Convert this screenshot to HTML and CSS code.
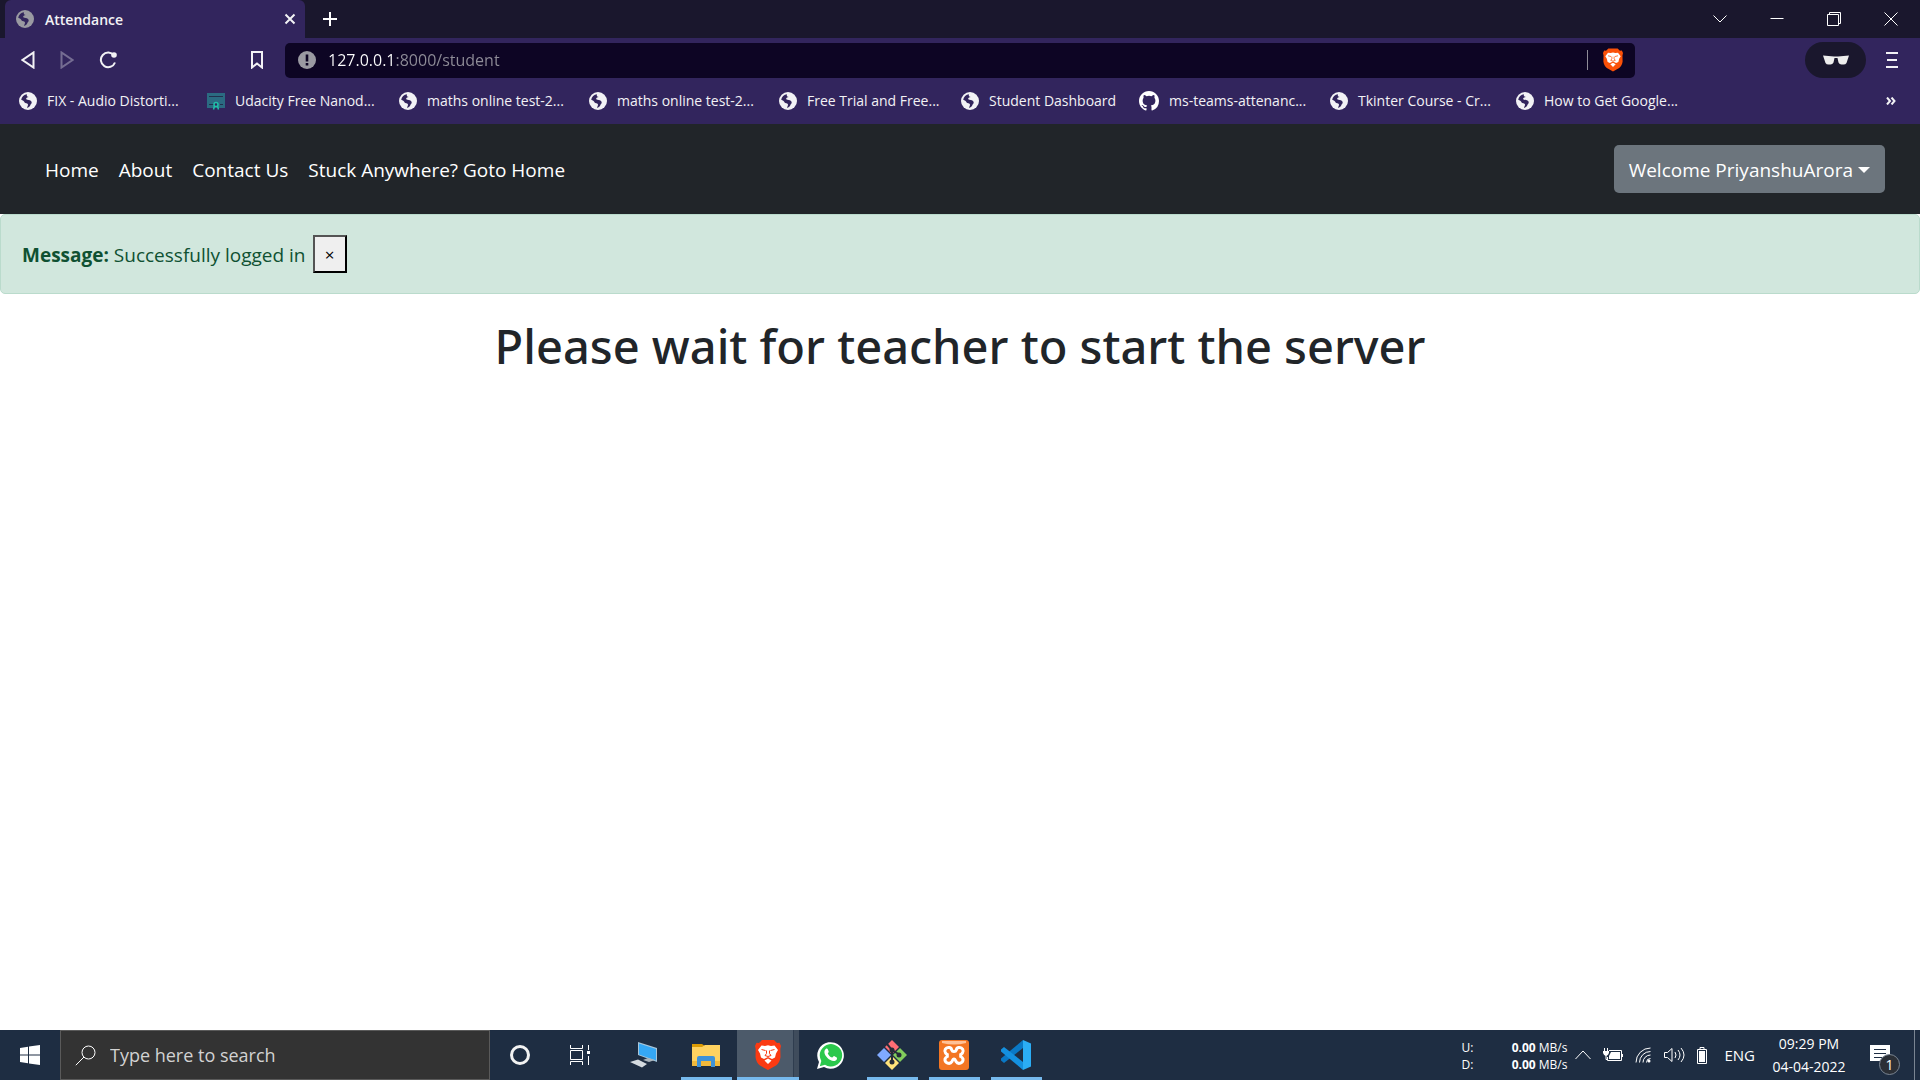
FILE: index.html
```html
<!DOCTYPE html>
<html lang="en">
<head>
<meta charset="utf-8">
<meta name="viewport" content="width=device-width, initial-scale=1">
<title>Attendance</title>
<link rel="stylesheet" href="styles.css">
</head>
<body>
<svg class="defs" width="0" height="0" aria-hidden="true">
  <symbol id="globe" viewBox="0 0 18 18">
    <circle cx="9" cy="9" r="9" fill="currentColor"/>
    <path d="M2.200 7.800C2.600 4.800 5 2.500 8 2.200C7.400 3.800 8 4.600 9.800 5C8 5.300 7 6 7.200 6.900C7.500 8 9.200 7.600 11 8.300C13.200 9.200 13.200 11.500 11.600 12.600C11.200 14 10.400 15.400 8 16C8.200 14.400 9.400 13.200 8.900 12.200C8.300 11.200 6.300 11.700 5.600 10.600C5 9 3.800 8.200 2.200 7.800Z" fill="#32255d"/>
  </symbol>
  <symbol id="brave" viewBox="0 0 26 30">
    <path class="brave-shield" d="M7 0h12l3 3 2.500-.3L26 6l-.7 3 .2 8c-.5 4-2 6.500-4.500 8.500L13 30l-8-4.500C2.500 23.500 1 21 .5 17l.2-8L0 6l1.500-3.300L4 3Z"/>
    <path d="M6.500 5.500 10 6l3-.8 3 .8 3.500-.5L23 10l-2 3.500-1 4-3 1.500-4-2-4 2-3-1.500-1-4L3 10ZM13 18.500l3.500 2L13 24l-3.500-3.500Z" fill="#fff"/>
    <path d="m6.500 9.500 4 1M19.500 9.500l-4 1M11.500 10.500v3l-1.500 2 3 1 3-1-1.500-2v-3" fill="none" class="brave-lines"/>
  </symbol>
</svg>

<header class="browser">
  <div class="tabstrip">
    <div class="tab">
      <svg class="globe muted" aria-hidden="true"><use href="#globe"/></svg>
      <span class="tab-title">Attendance</span>
      <button class="icon-btn" aria-label="Close tab"><svg width="12" height="12" viewBox="0 0 12 12"><path d="M1.500 1.500l9 9M10.500 1.500l-9 9" class="line2"/></svg></button>
    </div>
    <button class="icon-btn new-tab" aria-label="New tab"><svg width="16" height="16" viewBox="0 0 16 16"><path d="M8 1v14M1 8h14" class="line2"/></svg></button>
    <div class="window-controls">
      <button class="icon-btn" aria-label="Search tabs"><svg width="14" height="14" viewBox="0 0 14 14"><path d="M.5 3.500 7 10l6.500-6.500" class="line1"/></svg></button>
      <button class="icon-btn" aria-label="Minimize"><svg width="14" height="14" viewBox="0 0 14 14"><path d="M.5 6.500h13" class="line1"/></svg></button>
      <button class="icon-btn" aria-label="Restore"><svg width="14" height="14" viewBox="0 0 14 14"><path d="M.5 2.500h11v11H.5zM2.500 2V.5h11v11H12" class="line1"/></svg></button>
      <button class="icon-btn" aria-label="Close"><svg width="14" height="14" viewBox="0 0 14 14"><path d="m.5.500 13 13M13.500.500l-13 13" class="line1"/></svg></button>
    </div>
  </div>

  <div class="toolbar">
    <div class="history">
      <button class="icon-btn" aria-label="Back"><svg width="14" height="18" viewBox="0 0 14 18"><path d="M12.500 1.500v15L1.500 9Z" class="line2"/></svg></button>
      <button class="icon-btn faded" aria-label="Forward"><svg width="14" height="18" viewBox="0 0 14 18"><path d="M1.500 1.500v15l11-7.500Z" class="line2"/></svg></button>
      <button class="icon-btn" aria-label="Reload"><svg width="18" height="18" viewBox="0 0 18 18"><path d="M15 4.500A7.300 7.300 0 1 0 16 11.500" class="line2"/><circle cx="15" cy="4" r="2.800" fill="currentColor"/></svg></button>
    </div>
    <button class="icon-btn bookmark" aria-label="Bookmark this page"><svg width="14" height="18" viewBox="0 0 14 18"><path d="M2 1h10v15.500L7 12.500l-5 4Z" class="line2"/></svg></button>
    <div class="address">
      <svg width="18" height="18" viewBox="0 0 18 18" aria-hidden="true"><circle cx="9" cy="9" r="9" fill="#9a9aa2"/><path d="M7.700 3.500h2.600v7H7.700zM7.700 12h2.600v2.500H7.700z" fill="#0d0524"/></svg>
      <input class="url" type="text" aria-label="Address" value="127.0.0.1:8000/student">
      <span class="divider"></span>
      <button class="icon-btn" aria-label="Brave Shields"><svg width="20" height="24" class="shield-flat"><use href="#brave"/></svg></button>
    </div>
    <button class="private" aria-label="Private window"><svg width="26" height="10" viewBox="0 0 26 10"><path d="M0 .5 11 1.500h4L26 .5l-1 3-1.500 4.500q-1 1.500-3 1.500h-2q-2 0-3-2L14.500 3h-3L10.500 7.500q-1 2-3 2h-2q-2 0-3-1.500L1 3.500Z" fill="#eee"/></svg></button>
    <button class="icon-btn" aria-label="Menu"><svg width="12" height="18" viewBox="0 0 12 18"><path d="M0 2h12M1 9h10M0 16h12" class="line2"/></svg></button>
  </div>

  <nav class="bookmarks" aria-label="Bookmarks">
    <a href="#"><svg class="globe" aria-hidden="true"><use href="#globe"/></svg><span>FIX - Audio Distorti...</span></a>
    <a href="#"><svg class="globe" viewBox="0 0 18 18" aria-hidden="true"><path d="M0 1h18v15H0z" fill="#2b6b82"/><path d="M2 4.500h14M2 12.500h5M13 12.500h3" stroke="#21304f"/><circle cx="9" cy="12.500" r="2" fill="#32255d" stroke="#20c0a8" stroke-width="1.500"/><path d="m7.500 14-1 3.500M10.500 14l1 3.500" stroke="#20c0a8" stroke-width="1.500"/></svg><span>Udacity Free Nanod...</span></a>
    <a href="#"><svg class="globe" aria-hidden="true"><use href="#globe"/></svg><span>maths online test-2...</span></a>
    <a href="#"><svg class="globe" aria-hidden="true"><use href="#globe"/></svg><span>maths online test-2...</span></a>
    <a href="#"><svg class="globe" aria-hidden="true"><use href="#globe"/></svg><span>Free Trial and Free...</span></a>
    <a href="#"><svg class="globe" aria-hidden="true"><use href="#globe"/></svg><span>Student Dashboard</span></a>
    <a href="#"><svg class="github" viewBox="0 0 16 16" aria-hidden="true"><path fill="#fff" d="M8 0C3.580 0 0 3.580 0 8c0 3.540 2.290 6.530 5.470 7.590.4.070.55-.17.55-.38 0-.19-.01-.82-.01-1.490-2.010.37-2.530-.49-2.690-.94-.09-.23-.48-.94-.82-1.130-.28-.15-.68-.52-.01-.53.63-.01 1.080.58 1.230.82.72 1.210 1.870.87 2.330.66.070-.52.28-.87.51-1.070-1.780-.2-3.640-.89-3.640-3.950 0-.87.31-1.590.82-2.150-.08-.2-.36-1.020.08-2.120 0 0 .67-.21 2.200.82a7.600 7.600 0 0 1 4 0c1.530-1.040 2.200-.82 2.200-.82.44 1.100.16 1.920.08 2.120.51.56.82 1.270.82 2.150 0 3.070-1.870 3.750-3.650 3.950.29.25.54.73.54 1.480 0 1.070-.01 1.930-.01 2.200 0 .21.15.46.55.38A8.010 8.010 0 0 0 16 8c0-4.420-3.580-8-8-8z"/></svg><span>ms-teams-attenanc...</span></a>
    <a href="#"><svg class="globe" aria-hidden="true"><use href="#globe"/></svg><span>Tkinter Course - Cr...</span></a>
    <a href="#"><svg class="globe" aria-hidden="true"><use href="#globe"/></svg><span>How to Get Google...</span></a>
    <button class="icon-btn" aria-label="More bookmarks"><svg width="10" height="8" viewBox="0 0 10 8"><path d="m1 .5 3 3.500-3 3.500M5.500.500l3 3.500-3 3.500" class="line2"/></svg></button>
  </nav>
</header>

<nav class="navbar" aria-label="Site">
  <a href="#">Home</a>
  <a href="#">About</a>
  <a href="#">Contact Us</a>
  <a href="#">Stuck Anywhere? Goto Home</a>
  <button class="account">Welcome PriyanshuArora<span class="caret"></span></button>
</nav>

<main>
  <div class="alert" role="alert">
    <p><strong>Message:</strong> Successfully logged in</p>
    <button class="dismiss" aria-label="Close">×</button>
  </div>
  <h1>Please wait for teacher to start the server</h1>
</main>

<footer class="taskbar">
  <button class="task start" aria-label="Start"><svg width="20" height="20" viewBox="0 0 20 20"><path fill="#fff" d="M0 3l8-1.200V9.500H0zM9 1.600 20 0v9.500H9zM0 10.500h8v7.700L0 17zM9 10.500h11V20L9 18.400z"/></svg></button>
  <label class="search">
    <svg width="21" height="21" viewBox="0 0 21 21" aria-hidden="true"><circle cx="13.500" cy="7.500" r="6.500" class="line1"/><path d="M9 12 .8 20.200" class="line1"/></svg>
    <input type="text" aria-label="Search" placeholder="Type here to search">
  </label>
  <button class="task start" aria-label="Cortana"><svg width="20" height="20" viewBox="0 0 20 20"><circle cx="10" cy="10" r="8.500" fill="none" stroke="#f2f2f2" stroke-width="3"/></svg></button>
  <button class="task start" aria-label="Task view"><svg width="20" height="20" viewBox="0 0 20 20"><path d="M.5 0v3.500h12V0M.5 5.500h12v9H.5zM.5 20v-3.500h12V20M18.500 0v5M18.500 11v9" class="line1"/><path d="M17 6h3v3h-3z" fill="#fff"/></svg></button>
  <div class="apps">
    <button class="task" aria-label="This PC"><svg width="28" height="26" viewBox="0 0 28 26"><path d="m8 0 19 6v14L8 13Z" fill="#a9c5d8"/><path d="m9 1.500 17 5.500v11.500L9 12.500Z" fill="#35a7f4"/><path d="m13 18 5-2 7 2-6 2Z" fill="#aab4bb"/><path d="m0 20 8-2.500L17 22l-5 3.500Z" fill="#d5dbe0"/></svg></button>
    <button class="task open" aria-label="File Explorer"><svg width="28" height="24" viewBox="0 0 28 24"><path d="M0 1h10l3 2-2 3H0z" fill="#dc9b04"/><path d="M0 4h10l3-2h15v21H0z" fill="#ffd260"/><path d="M0 18h28v5H0z" fill="#f2b93b"/><path d="M5 24V15q0-2 2-2h14q2 0 2 2v9h-4v-6H9v6z" fill="#3f92d8"/></svg></button>
    <button class="task open active" aria-label="Brave"><svg width="26" height="30" class="shield-red"><use href="#brave"/></svg></button>
    <button class="task" aria-label="WhatsApp"><svg width="27" height="27" viewBox="0 0 27 27"><path d="M0 27l2-7A13.300 13.300 0 1 1 7 25Z" fill="#fff"/><path d="M2.800 24.200 4.300 19A11.200 11.200 0 1 1 8 22.800Z" fill="#2bc84c"/><path d="M9 6.800c.8-.5 1.500-.2 1.800.5l.9 2.200c.2.800-.9 1.600-.9 1.900.8 1.900 2.200 3.200 4.300 4.200.5.200 1.400-1.600 2-1.500l2.600 1.300c.8.500.1 2.500-1 3.100-2.600 1.400-6-.4-8.200-2.500C7.700 13.200 6 9 9 6.800Z" fill="#fff"/></svg></button>
    <button class="task open" aria-label="Git"><svg width="30" height="30" viewBox="0 0 30 30"><path d="M15 0l7 7-7 7-7-7Z" fill="#ff6d75"/><path d="m7 8 7 7-7 7-7-7Z" fill="#80aaff"/><path d="m23 8 7 7-7 7-7-7Z" fill="#82cc5c"/><path d="m15 16 7 7-7 7-7-7Z" fill="#ffe27a"/><path d="m10 4 5 6v13M15 10l8 5" fill="none" stroke="#252b38" stroke-width="2"/><circle cx="15" cy="10" r="2.500" fill="#252b38"/><circle cx="15" cy="22" r="2.500" fill="#252b38"/><circle cx="22" cy="15" r="2.500" fill="#252b38"/></svg></button>
    <button class="task open" aria-label="XAMPP"><svg width="30" height="30" viewBox="0 0 30 30"><rect width="30" height="30" rx="3" fill="#f37623"/><path d="M3 1h24v2q-12 3-24 0z" fill="#ffc195"/><path d="M9.500 7.500a3.500 3.500 0 0 0-3 5.500q.8 1 1.800 1.500l0 2q-1.800.8-2.300 2.500a3.800 3.800 0 0 0 7 2.500q1-2.500 2-2.500t2 2.500a3.800 3.800 0 0 0 7-2.500q-.5-1.700-2.300-2.500l0-2q1-.5 1.800-1.500a3.500 3.500 0 0 0-3-5.500h-1q-2 .5-2.200 2.500-.5 1.500-2.300 1.500t-2.300-1.500q-.2-2-2.200-2.500Z" fill="none" stroke="#fff" stroke-width="3"/></svg></button>
    <button class="task open" aria-label="Visual Studio Code"><svg width="30" height="30" viewBox="0 0 30 30"><path d="M22 0v8L3 23 0 20.500v-2Z" fill="#0a78c5"/><path d="M22 30v-8L3 7 0 9.500v2Z" fill="#1490df"/><path d="m22 0 8 3.500v23L22 30Z" fill="#2badf5"/></svg></button>
  </div>

  <div class="tray">
    <dl class="net">
      <dt>U:</dt><dd><b>0.00</b> MB/s</dd>
      <dt>D:</dt><dd><b>0.00</b> MB/s</dd>
    </dl>
    <div class="tray-icons">
      <button class="icon-btn" aria-label="Show hidden icons"><svg width="16" height="10" viewBox="0 0 16 10"><path d="m.5 9 7.500-8 7.500 8" class="line1"/></svg></button>
      <svg width="20" height="14" viewBox="0 0 20 14" role="img" aria-label="Charging"><path d="M6 2.500h12.500v10H4.500V9M19.500 6v3M1.500 0v3M4.500 0v3M3 7v4.500h1.500" class="line1"/><path d="M0 3h6v2q-1 3-3 3T0 5zM8 4h9v7H6V8z" fill="#fff"/></svg>
      <svg width="17" height="16" viewBox="0 0 17 16" role="img" aria-label="Wi-Fi"><path d="M1 15.500A14.500 14.500 0 0 1 15.500 1M4.500 15.500a11 11 0 0 1 11-11M8 15.500A7.500 7.500 0 0 1 15.500 8M11.500 15.500a4 4 0 0 1 4-4" class="line1"/><circle cx="14" cy="14" r="1.500" fill="#fff"/></svg>
      <svg width="21" height="18" viewBox="0 0 21 18" role="img" aria-label="Volume"><path d="M.5 6.500h3l4.500-4v13l-4.500-4h-3zM11 6q2 3 0 6M14 4q4 5 0 10M17 2q6 7 0 14" class="line1"/></svg>
      <svg width="10" height="17" viewBox="0 0 10 17" role="img" aria-label="Battery"><path d="M.5 2.500h9v14h-9zM3 2V.500h4V2" class="line1"/><path d="M2 4h6v11H2z" fill="#fff"/></svg>
    </div>
    <span class="lang">ENG</span>
    <time class="clock" datetime="2022-04-04T21:29">09:29 PM<br>04-04-2022</time>
    <button class="icon-btn notify" aria-label="Notifications"><svg width="20" height="20" viewBox="0 0 20 20"><path d="M0 0h20v16h-5l-5 4v-4H0z" fill="#fff"/><path d="M4 4.500h12M4 8.500h12M4 12.500h8" stroke="#1e2d42"/></svg><span class="badge">1</span></button>
  </div>
</footer>
</body>
</html>
```
FILE: styles.css
```css
* { box-sizing: border-box; }

body {
  margin: 0;
  min-height: 100vh;
  display: flex;
  flex-direction: column;
  background: #fff;
  color: #212529;
  font-family: "Open Sans", "Noto Sans", sans-serif;
  font-size: 19px;
}

button, input { font: inherit; }
button { border: 0; padding: 0; background: none; color: inherit; }
a { color: inherit; text-decoration: none; }
svg { display: block; flex: none; }
.defs { position: absolute; }
.line1, .line2 { fill: none; stroke: currentColor; stroke-width: 1px; }
.line2 { stroke-width: 2px; }
.icon-btn { display: flex; align-items: center; justify-content: center; }

/* Browser chrome */
.browser { background: #32255d; color: #f2f2f5; font-size: 14px; }
.tabstrip { display: flex; align-items: center; height: 38px; padding-left: 5px; background: #1a172d; }
.tab { display: flex; align-items: center; gap: 11px; width: 300px; height: 38px; padding: 0 9px 0 11px; background: #32255d; border-radius: 6px 6px 0 0; }
.tab-title { flex: 1; font-weight: 600; }
.globe { width: 18px; height: 18px; }
.globe.muted { color: #9a9aa2; }
.github { width: 20px; height: 20px; }
.new-tab { margin-left: 17px; color: #fff; }
.window-controls { display: flex; margin-left: auto; padding-right: 1px; color: #fff; }
.window-controls .icon-btn { width: 57px; height: 38px; }

.toolbar { display: flex; align-items: center; height: 45px; padding: 0 22px 1px 21px; }
.history { display: flex; align-items: center; gap: 25px; }
.faded { opacity: .35; }
.bookmark { margin-left: 133px; }
.address { flex: 1; display: flex; align-items: center; height: 35px; margin: 0 170px 0 21px; padding: 0 12px 0 13px; background: #0d0524; border-radius: 5px; }
.url { flex: 1; min-width: 0; margin-left: 12px; padding: 0; border: 0; outline: 0; font-size: 16px; color: #8f8d98; background: linear-gradient(90deg, #fff 66px, #8f8d98 66px); background-clip: text; -webkit-text-fill-color: transparent; }
.divider { width: 1px; height: 20px; margin-right: 15px; background: #8f8d98; }
.shield-flat { --shield: #fb5108; }
.shield-red { --shield: #fb3a12; }
.brave-shield { fill: var(--shield); }
.brave-lines { stroke: var(--shield); stroke-width: 1px; }
.private { display: flex; align-items: center; justify-content: center; width: 61px; height: 36px; margin-right: 20px; border-radius: 18px; background: #1a172d; }

.bookmarks { display: grid; grid-template-columns: 188px 192px 190px 190px 182px 178px 191px 186px 200px 1fr; align-items: center; height: 41px; padding: 0 24px 6px 19px; }
.bookmarks a { display: flex; align-items: center; gap: 10px; white-space: nowrap; }
.bookmarks .icon-btn { justify-self: end; }

/* Site */
.navbar { display: flex; align-items: center; gap: 20px; min-height: 90px; padding: 0 35px 0 45px; background: #212529; color: #fff; }
.navbar a { padding-top: 1px; }
.account { display: flex; align-items: center; gap: 5px; height: 48px; margin-left: auto; padding: 1px 15px 0; border-radius: 5px; background: #6c757d; }
.caret { border: 6px solid transparent; border-top-color: currentColor; border-bottom: 0; }

main { flex: 1; }
.alert { display: flex; align-items: center; gap: 7px; min-height: 80px; padding: 20px; border: 1px solid #badbcc; border-radius: 5px; background: #d1e7dd; color: #0f5132; }
.alert p { margin: 0; padding: 1px 0 0 1px; }
.dismiss { width: 34px; height: 38px; border: 2px outset #000; background: #efefef; color: #000; font-size: 17px; }
h1 { margin: 22px 0 0; text-align: center; font-family: "Noto Sans", "Open Sans", sans-serif; font-size: 47px; line-height: 60px; font-weight: 500; }

/* Taskbar */
.taskbar { display: flex; height: 50px; background: #1e2d42; color: #fff; }
.apps { display: flex; margin-left: 3px; }
.task { display: flex; align-items: center; justify-content: center; width: 62px; border: solid transparent; border-width: 3px 0; flex: none; }
.start { width: 60px; }
.open { background: linear-gradient(#76b9ed, #76b9ed) center bottom / 51px 3px no-repeat border-box; }
.active { background: linear-gradient(#76b9ed, #76b9ed) center bottom / 100% 3px no-repeat border-box, linear-gradient(90deg, #4c5a6a 56px, #2f3d4f 56px, #2f3d4f 57px, #3f4c5c 57px) border-box; }
.search { display: flex; align-items: center; gap: 14px; width: 430px; padding: 0 14px; border: 1px solid #5a5a5a; background: #333; }
.search input { flex: 1; min-width: 0; padding: 0; border: 0; outline: 0; background: none; color: #fff; font-size: 18px; }
.search input::placeholder { color: #d2d2d2; opacity: 1; }

.tray { display: flex; align-items: center; margin-left: auto; margin-right: 5px; padding-right: 24px; border-right: 1px solid #7a8592; font-size: 15px; }
.net { display: grid; grid-template-columns: 30px 76px; margin: 0 8px 0 0; padding-top: 2px; font-size: 12px; line-height: 17px; }
.net dd { margin: 0; text-align: right; }
.tray-icons { display: flex; align-items: center; gap: 12px; }
.lang { margin-left: 17px; }
.clock { width: 78px; margin-left: 15px; text-align: center; font-size: 14px; line-height: 23px; white-space: nowrap; }
.notify { position: relative; margin-left: 22px; }
.badge { position: absolute; left: 9px; top: 9px; width: 21px; height: 21px; border: 1px solid #7a8592; border-radius: 50%; background: #2b2f36; font-size: 14px; line-height: 19px; text-align: center; }
```
